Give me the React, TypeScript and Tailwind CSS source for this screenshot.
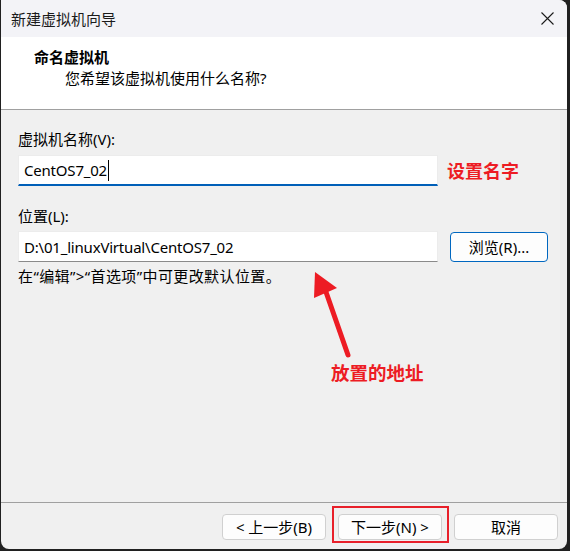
import React from "react";

const font = { fontFamily: '"Noto Sans", "Noto Sans CJK SC", sans-serif' };

function Btn({ children, w = "w-[104px]" }: { children: React.ReactNode; w?: string }) {
  return (
    <div className={`${w} h-[26px] flex items-center justify-center rounded-[4px] border border-[#d0d0d0] bg-[#fdfdfd] text-[15px] leading-[20px] text-black`}>
      {children}
    </div>
  );
}

export default function App() {
  return (
    <div className="relative w-[570px] h-[551px] bg-[#202020] overflow-hidden" style={font}>
      <div className="ml-[1px] w-[566px] h-[549px] rounded-tr-[8px] rounded-b-[8px] overflow-hidden flex flex-col bg-[#f0f0f0]">
        {/* title bar */}
        <div className="h-[37px] shrink-0 bg-[#f3f3f7] flex items-center justify-between pl-[10px] pr-[13px]">
          <span className="text-[15px] leading-[20px] text-[#1b1b1b]">新建虚拟机向导</span>
          <svg width="13" height="13" viewBox="0 0 13 13">
            <path d="M0.5 0.5 L12.5 12.5 M12.5 0.5 L0.5 12.5" stroke="#1b1b1b" strokeWidth="1.1" fill="none" />
          </svg>
        </div>
        {/* header */}
        <div className="h-[73px] shrink-0 bg-white border-b border-[#a0a0a0] flex flex-col">
          <div className="pl-[33px] pt-[10px] text-[15px] leading-[20px] font-bold text-black">命名虚拟机</div>
          <div className="pl-[64px] pt-[1px] text-[15px] leading-[20px] text-black">您希望该虚拟机使用什么名称?</div>
        </div>
        {/* body */}
        <div className="flex-1 flex flex-col pl-[17px]">
          <div className="mt-[19px] text-[15px] leading-[20px] text-black">虚拟机名称(V):</div>
          <div className="mt-[6px] flex items-center gap-[9px]">
            <div className="w-[420px] h-[31px] bg-white border border-[#ececec] border-b-2 border-b-[#005fb8] flex items-center pl-[5px]">
              <span className="text-[15px] leading-[20px] text-black tracking-[-0.2px]">CentOS7_02</span>
              <span className="w-[1px] h-[21px] bg-black ml-[1px]" />
            </div>
            <span className="text-[18px] leading-[22px] font-bold text-[#ed1c24]">设置名字</span>
          </div>
          <div className="mt-[20px] text-[15px] leading-[20px] text-black">位置(L):</div>
          <div className="mt-[5px] flex items-center gap-[12px]">
            <div className="w-[420px] h-[31px] bg-white border border-[#ececec] border-b-[#8a8a8a] flex items-center pl-[5px]">
              <span className="text-[15px] leading-[20px] text-black tracking-[-0.2px]">D:\01_linuxVirtual\CentOS7_02</span>
            </div>
            <div className="w-[98px] h-[30px] flex items-center justify-center rounded-[4px] border border-[#0067c0] bg-[#fdfdfd] text-[15px] leading-[20px] text-black">
              浏览(R)...
            </div>
          </div>
          <div className="mt-[4px] text-[15px] leading-[20px] tracking-[0.4px] text-black">在“编辑”&gt;“首选项”中可更改默认位置。</div>
        </div>
        {/* footer */}
        <div className="h-[47px] shrink-0 border-t border-[#a0a0a0] flex justify-end items-start pt-[11px] pr-[9px] gap-[12px]">
          <Btn>&lt; 上一步(B)</Btn>
          <div className="relative">
            <Btn>下一步(N) &gt;</Btn>
            <span className="absolute -left-[6px] -top-[8px] w-[117px] h-[37px] border-2 border-[#e8202a]" />
          </div>
          <Btn>取消</Btn>
        </div>
      </div>

      {/* annotation arrow */}
      <svg className="absolute left-0 top-0 pointer-events-none" width="570" height="551" viewBox="0 0 570 551">
        <line x1="326" y1="292" x2="348" y2="355" stroke="#ed1c24" strokeWidth="5" strokeLinecap="round" />
        <polygon points="315,272 314,298 337,288" fill="#ed1c24" />
      </svg>
      <span className="absolute left-[331px] top-[362px] text-[18.5px] leading-[22px] font-bold text-[#ed1c24] whitespace-nowrap">放置的地址</span>
    </div>
  );
}
